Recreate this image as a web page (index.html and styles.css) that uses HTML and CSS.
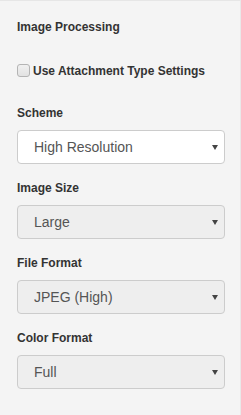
FILE: index.html
```html
<!DOCTYPE html>
<html lang="en">
<head>
<meta charset="utf-8">
<title>Image Processing</title>
<link rel="stylesheet" href="styles.css">
</head>
<body>
<div class="panel">
  <div class="title">Image Processing</div>
  <label class="check">
    <input class="check-box" type="checkbox">
    <span class="check-text">Use Attachment Type Settings</span>
  </label>
  <div class="field">
    <label class="field-label" for="scheme">Scheme</label>
    <div class="select-wrap">
      <select class="select" id="scheme">
        <option>High Resolution</option>
      </select>
    </div>
  </div>
  <div class="field">
    <label class="field-label" for="size">Image Size</label>
    <div class="select-wrap">
      <select class="select" id="size" disabled>
        <option>Large</option>
      </select>
    </div>
  </div>
  <div class="field">
    <label class="field-label" for="format">File Format</label>
    <div class="select-wrap">
      <select class="select" id="format" disabled>
        <option>JPEG (High)</option>
      </select>
    </div>
  </div>
  <div class="field">
    <label class="field-label" for="color">Color Format</label>
    <div class="select-wrap">
      <select class="select" id="color" disabled>
        <option>Full</option>
      </select>
    </div>
  </div>
</div>
</body>
</html>
```

FILE: styles.css
```css
html, body {
  margin: 0;
  padding: 0;
}

body {
  background: #f4f4f4;
  font-family: "Liberation Sans", Arial, sans-serif;
  color: #333;
  height: 415px;
  box-sizing: border-box;
  border-top: 1px solid #e6e6e6;
  border-right: 1px solid #e9e9e9;
}

.panel {
  display: flex;
  flex-direction: column;
  padding: 18px 15px 0 17px;
}

.title {
  font-size: 12px;
  font-weight: bold;
  line-height: 17px;
}

.check {
  display: flex;
  align-items: flex-start;
  gap: 3px;
  margin-top: 27px;
  font-size: 12px;
  font-weight: bold;
  line-height: 17px;
}

.check-box {
  -webkit-appearance: none;
  appearance: none;
  margin: 1px 0 0 0;
  width: 13px;
  height: 13px;
  box-sizing: border-box;
  border: 1px solid #b4b4b4;
  border-radius: 3px;
  background: linear-gradient(#f0f0f0, #e2e2e2);
}

.field {
  display: flex;
  flex-direction: column;
  gap: 8px;
  margin-top: 16px;
}

.check + .field {
  margin-top: 25px;
}

.field-label {
  font-size: 12px;
  font-weight: bold;
  line-height: 17px;
}

.select-wrap {
  position: relative;
}

.select-wrap::after {
  content: "";
  position: absolute;
  right: 7px;
  top: 15px;
  border-left: 3px solid transparent;
  border-right: 3px solid transparent;
  border-top: 5px solid #444;
  pointer-events: none;
}

.select {
  -webkit-appearance: none;
  appearance: none;
  display: block;
  width: 100%;
  height: 34px;
  box-sizing: border-box;
  margin: 0;
  padding: 0 20px 0 16px;
  border: 1px solid #ccc;
  border-radius: 4px;
  background: #fff;
  font-family: "Liberation Sans", Arial, sans-serif;
  font-size: 14px;
  color: #555;
  opacity: 1;
}

.select:disabled {
  background: #eee;
  color: #555;
  opacity: 1;
}
```
